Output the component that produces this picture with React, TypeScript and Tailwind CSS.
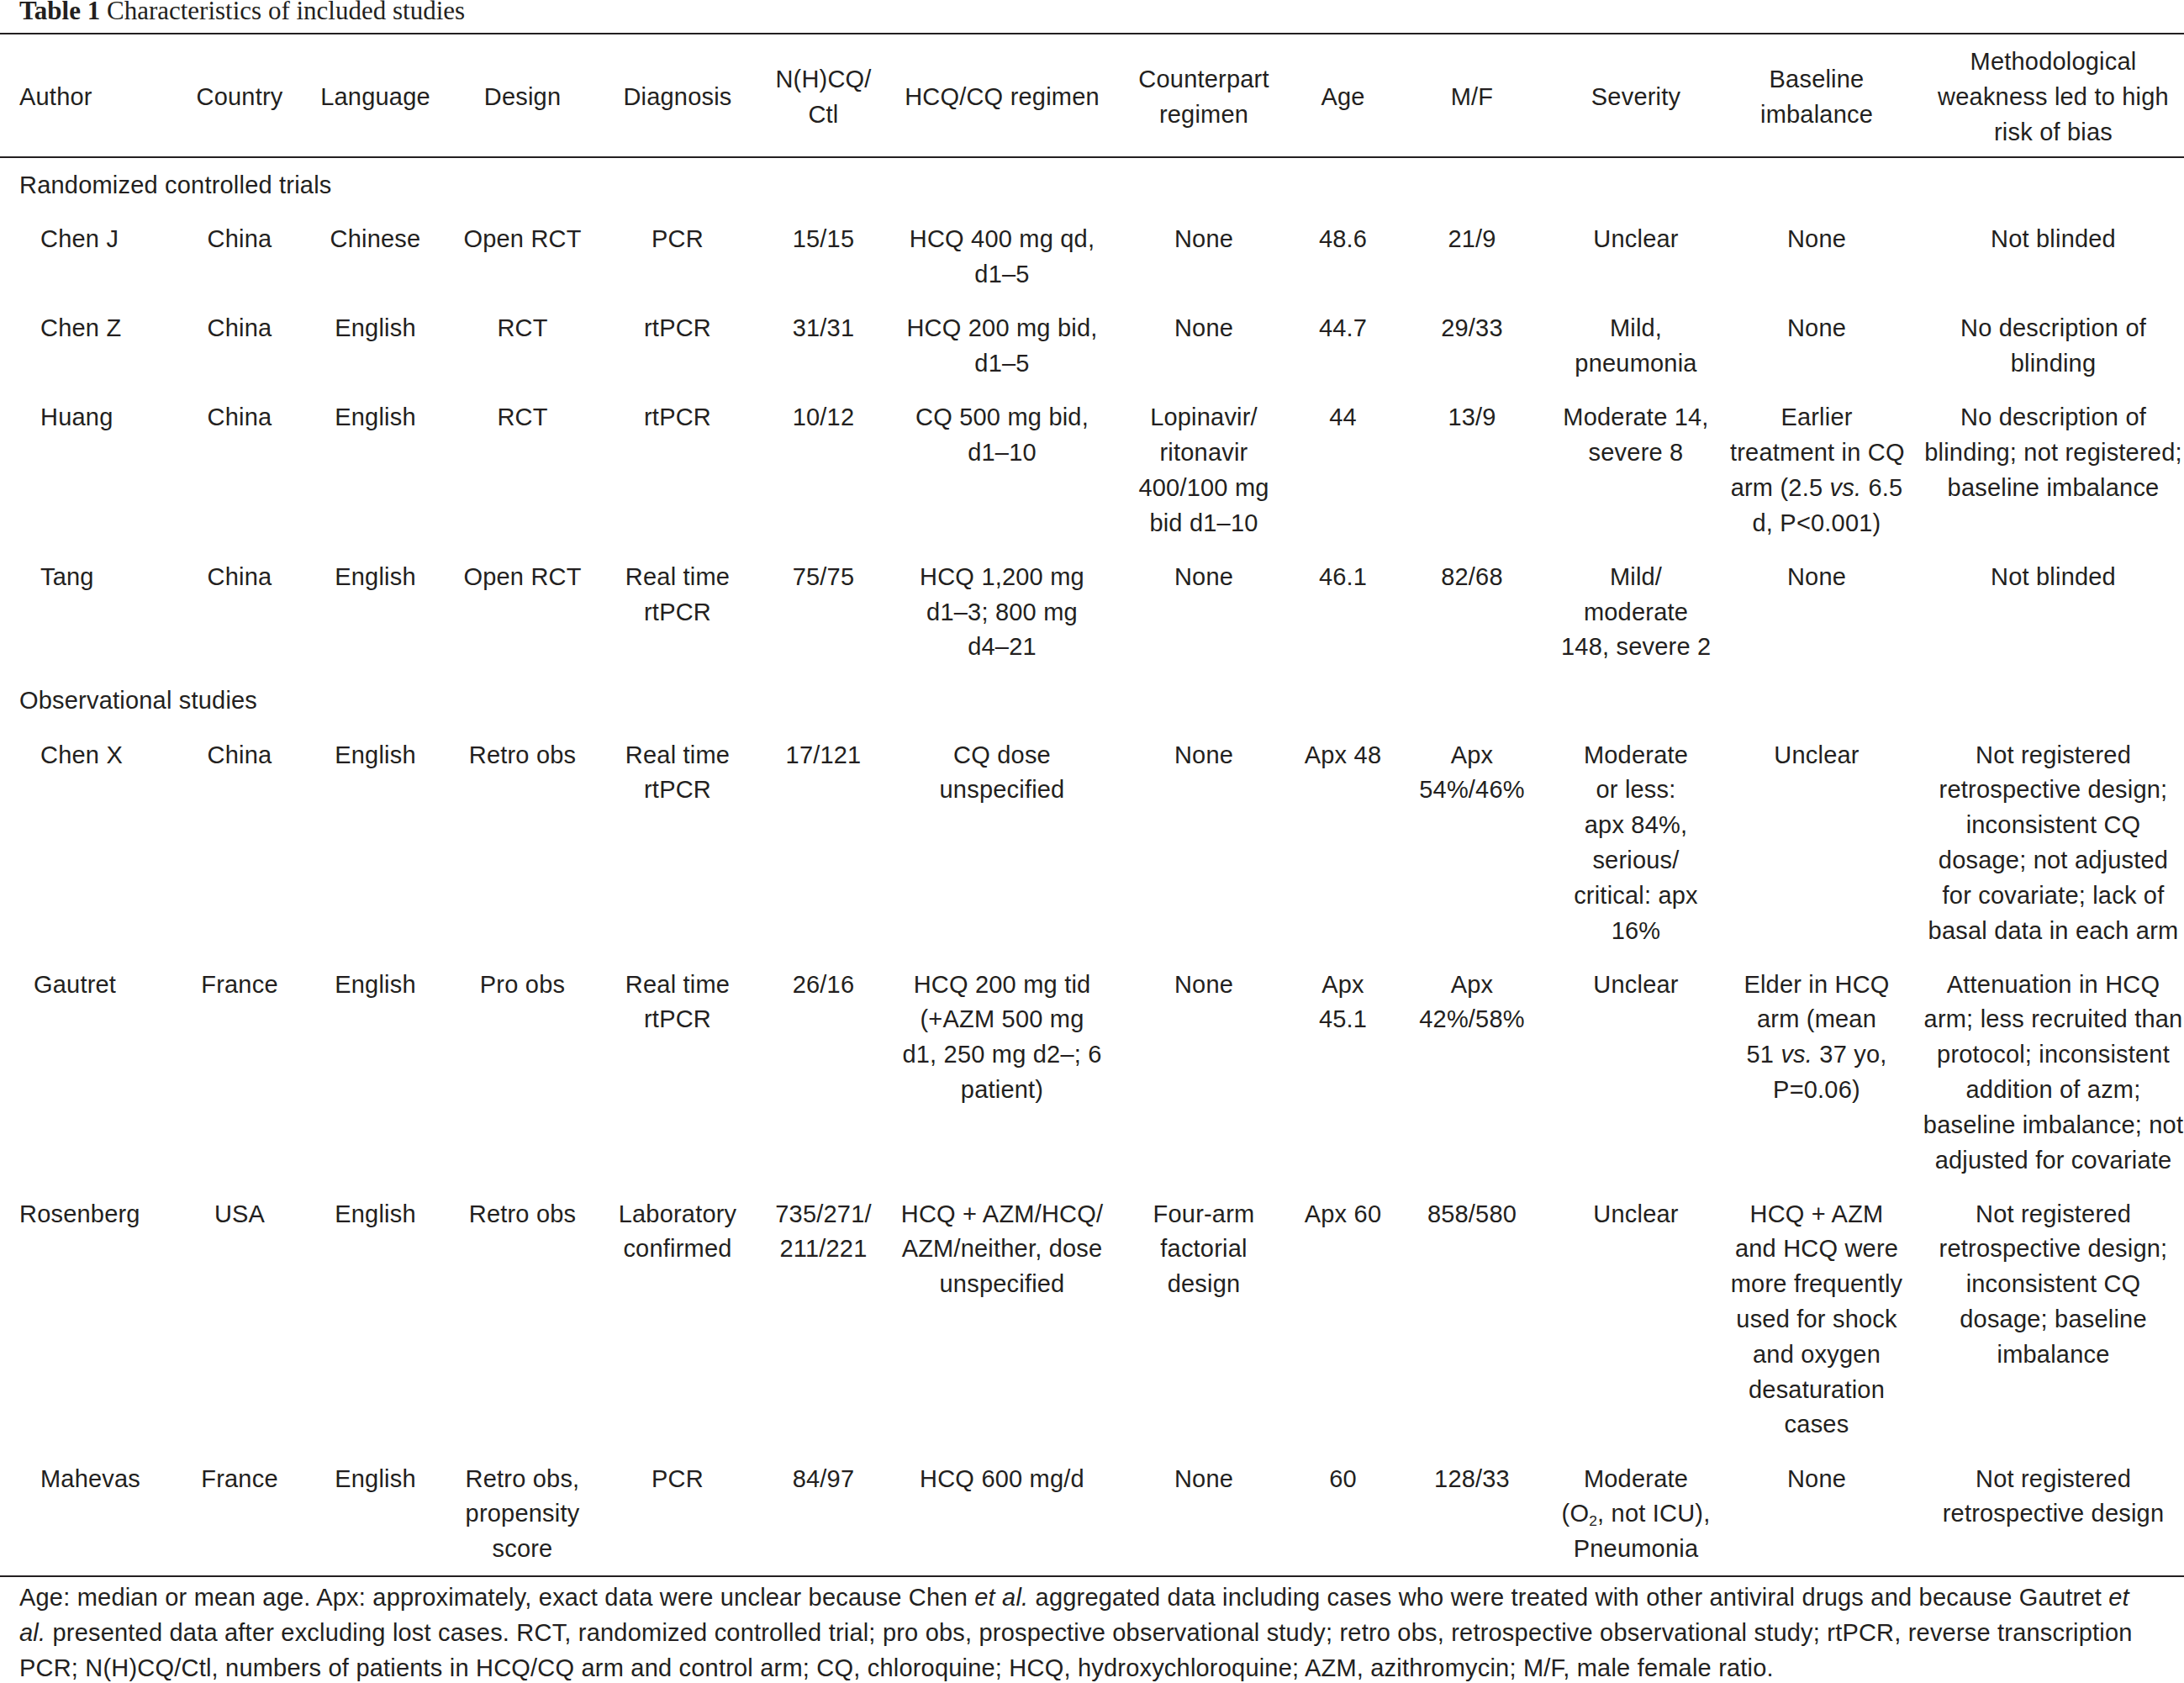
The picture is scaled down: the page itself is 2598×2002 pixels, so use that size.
import type { ReactNode } from 'react';

type Study = {
    author: string;
    authorClass: string;
    cells: ReactNode[][];
};

const vs = <i>vs.</i>;

const headers: ReactNode[][] = [
    ['Country'],
    ['Language'],
    ['Design'],
    ['Diagnosis'],
    ['N(H)CQ/', 'Ctl'],
    ['HCQ/CQ regimen'],
    ['Counterpart', 'regimen'],
    ['Age'],
    ['M/F'],
    ['Severity'],
    ['Baseline', 'imbalance'],
    ['Methodological', 'weakness led to high', 'risk of bias'],
];

const rcts: Study[] = [
    {
        author: 'Chen J',
        authorClass: 'pl-[48px]',
        cells: [
            ['China'],
            ['Chinese'],
            ['Open RCT'],
            ['PCR'],
            ['15/15'],
            ['HCQ 400 mg qd,', 'd1–5'],
            ['None'],
            ['48.6'],
            ['21/9'],
            ['Unclear'],
            ['None'],
            ['Not blinded'],
        ],
    },
    {
        author: 'Chen Z',
        authorClass: 'pl-[48px]',
        cells: [
            ['China'],
            ['English'],
            ['RCT'],
            ['rtPCR'],
            ['31/31'],
            ['HCQ 200 mg bid,', 'd1–5'],
            ['None'],
            ['44.7'],
            ['29/33'],
            ['Mild,', 'pneumonia'],
            ['None'],
            ['No description of', 'blinding'],
        ],
    },
    {
        author: 'Huang',
        authorClass: 'pl-[48px]',
        cells: [
            ['China'],
            ['English'],
            ['RCT'],
            ['rtPCR'],
            ['10/12'],
            ['CQ 500 mg bid,', 'd1–10'],
            ['Lopinavir/', 'ritonavir', '400/100 mg', 'bid d1–10'],
            ['44'],
            ['13/9'],
            ['Moderate 14,', 'severe 8'],
            ['Earlier', 'treatment in CQ', <>arm (2.5 {vs} 6.5</>, 'd, P<0.001)'],
            ['No description of', 'blinding; not registered;', 'baseline imbalance'],
        ],
    },
    {
        author: 'Tang',
        authorClass: 'pl-[48px]',
        cells: [
            ['China'],
            ['English'],
            ['Open RCT'],
            ['Real time', 'rtPCR'],
            ['75/75'],
            ['HCQ 1,200 mg', 'd1–3; 800 mg', 'd4–21'],
            ['None'],
            ['46.1'],
            ['82/68'],
            ['Mild/', 'moderate', '148, severe 2'],
            ['None'],
            ['Not blinded'],
        ],
    },
];

const observational: Study[] = [
    {
        author: 'Chen X',
        authorClass: 'pl-[48px]',
        cells: [
            ['China'],
            ['English'],
            ['Retro obs'],
            ['Real time', 'rtPCR'],
            ['17/121'],
            ['CQ dose', 'unspecified'],
            ['None'],
            ['Apx 48'],
            ['Apx', '54%/46%'],
            ['Moderate', 'or less:', 'apx 84%,', 'serious/', 'critical: apx', '16%'],
            ['Unclear'],
            [
                'Not registered',
                'retrospective design;',
                'inconsistent CQ',
                'dosage; not adjusted',
                'for covariate; lack of',
                'basal data in each arm',
            ],
        ],
    },
    {
        author: 'Gautret',
        authorClass: 'pl-[40px]',
        cells: [
            ['France'],
            ['English'],
            ['Pro obs'],
            ['Real time', 'rtPCR'],
            ['26/16'],
            ['HCQ 200 mg tid', '(+AZM 500 mg', 'd1, 250 mg d2–; 6', 'patient)'],
            ['None'],
            ['Apx', '45.1'],
            ['Apx', '42%/58%'],
            ['Unclear'],
            ['Elder in HCQ', 'arm (mean', <>51 {vs} 37 yo,</>, 'P=0.06)'],
            [
                'Attenuation in HCQ',
                'arm; less recruited than',
                'protocol; inconsistent',
                'addition of azm;',
                'baseline imbalance; not',
                'adjusted for covariate',
            ],
        ],
    },
    {
        author: 'Rosenberg',
        authorClass: 'pl-[23px]',
        cells: [
            ['USA'],
            ['English'],
            ['Retro obs'],
            ['Laboratory', 'confirmed'],
            ['735/271/', '211/221'],
            ['HCQ + AZM/HCQ/', 'AZM/neither, dose', 'unspecified'],
            ['Four-arm', 'factorial', 'design'],
            ['Apx 60'],
            ['858/580'],
            ['Unclear'],
            ['HCQ + AZM', 'and HCQ were', 'more frequently', 'used for shock', 'and oxygen', 'desaturation', 'cases'],
            ['Not registered', 'retrospective design;', 'inconsistent CQ', 'dosage; baseline', 'imbalance'],
        ],
    },
    {
        author: 'Mahevas',
        authorClass: 'pl-[48px]',
        cells: [
            ['France'],
            ['English'],
            ['Retro obs,', 'propensity', 'score'],
            ['PCR'],
            ['84/97'],
            ['HCQ 600 mg/d'],
            ['None'],
            ['60'],
            ['128/33'],
            [
                'Moderate',
                <>
                    (O<sub className="text-[0.6em]">2</sub>, not ICU),
                </>,
                'Pneumonia',
            ],
            ['None'],
            ['Not registered', 'retrospective design'],
        ],
    },
];

function Lines({ lines }: { lines: ReactNode[] }) {
    return (
        <>
            {lines.map((line, i) => (
                <div key={i}>{line}</div>
            ))}
        </>
    );
}

function SectionRow({ title }: { title: string }) {
    return (
        <tr>
            <td colSpan={13} className="pl-[23px] pt-[12px] pb-[10.3px] text-left">
                {title}
            </td>
        </tr>
    );
}

function StudyRow({ study, last }: { study: Study; last?: boolean }) {
    return (
        <tr className={last ? 'border-b-2 border-[#231f20]' : ''}>
            <td className={`${study.authorClass} pt-[12px] pb-[10.3px] text-left align-top`}>{study.author}</td>
            {study.cells.map((cell, i) => (
                <td key={i} className="pl-[23px] pt-[12px] pb-[10.3px] text-center align-top">
                    <Lines lines={cell} />
                </td>
            ))}
        </tr>
    );
}

export default function App() {
    return (
        <div className="min-h-screen w-[2598px] bg-white font-['Liberation_Sans',Arial,sans-serif] text-[29px] leading-[41.8px] tracking-[0.2px] text-[#231f20]">
            <div className="pl-[23px] font-['Liberation_Serif','Times_New_Roman',serif] text-[31px] leading-[26px] tracking-normal">
                <span className="font-bold">Table 1</span> Characteristics of included studies
            </div>

            <table className="mt-[13px] w-full table-fixed border-collapse whitespace-nowrap">
                <colgroup>
                    <col className="w-[197px]" />
                    <col className="w-[153px]" />
                    <col className="w-[170px]" />
                    <col className="w-[180px]" />
                    <col className="w-[189px]" />
                    <col className="w-[158px]" />
                    <col className="w-[267px]" />
                    <col className="w-[213px]" />
                    <col className="w-[118px]" />
                    <col className="w-[189px]" />
                    <col className="w-[201px]" />
                    <col className="w-[229px]" />
                    <col className="w-[334px]" />
                </colgroup>
                <thead>
                    <tr className="border-y-2 border-[#231f20]">
                        <th className="pl-[23px] pt-[12px] pb-[8px] text-left align-middle font-normal">Author</th>
                        {headers.map((h, i) => (
                            <th key={i} className="pl-[23px] pt-[12px] pb-[8px] text-center align-middle font-normal">
                                <Lines lines={h} />
                            </th>
                        ))}
                    </tr>
                </thead>
                <tbody>
                    <SectionRow title="Randomized controlled trials" />
                    {rcts.map((s) => (
                        <StudyRow key={s.author} study={s} />
                    ))}
                    <SectionRow title="Observational studies" />
                    {observational.map((s, i) => (
                        <StudyRow key={s.author} study={s} last={i === observational.length - 1} />
                    ))}
                </tbody>
            </table>

            <div className="pl-[23px] pt-[4px] whitespace-nowrap">
                <div>
                    Age: median or mean age. Apx: approximately, exact data were unclear because Chen <i>et al.</i> aggregated
                    data including cases who were treated with other antiviral drugs and because Gautret <i>et</i>
                </div>
                <div>
                    <i>al.</i> presented data after excluding lost cases. RCT, randomized controlled trial; pro obs, prospective
                    observational study; retro obs, retrospective observational study; rtPCR, reverse transcription
                </div>
                <div>
                    PCR; N(H)CQ/Ctl, numbers of patients in HCQ/CQ arm and control arm; CQ, chloroquine; HCQ,
                    hydroxychloroquine; AZM, azithromycin; M/F, male female ratio.
                </div>
            </div>
        </div>
    );
}
